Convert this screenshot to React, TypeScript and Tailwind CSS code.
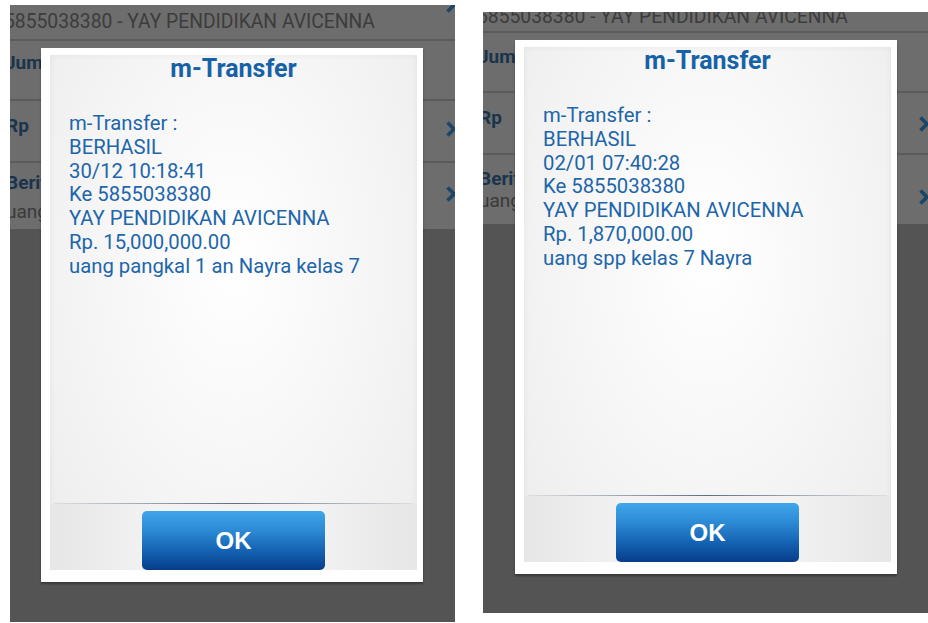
import React from "react";

type ModalProps = { lines: string[] };

function Chevron() {
  return (
    <svg width="12" height="18" viewBox="0 0 12 18" className="shrink-0 mr-[-2px]">
      <path d="M2.5 2.5 L9 9 L2.5 15.5" fill="none" stroke="#1b4668" strokeWidth="3.6" strokeLinecap="butt" />
    </svg>
  );
}

function Modal({ lines }: ModalProps) {
  return (
    <div className="w-[382px] h-[534px] bg-white pt-[7px] pl-[9px] pr-[6px] pb-[12px] shadow-[0_2px_2px_rgba(0,0,0,0.35)]">
      <div className="h-full flex flex-col bg-[radial-gradient(ellipse_at_50%_40%,#ffffff_0%,#f7f7f7_45%,#ececec_100%)] shadow-[inset_0_0_6px_rgba(0,0,0,0.06)]">
        <div className="text-center text-[25px] leading-[26px] font-bold text-[#1762a7] font-['Roboto',sans-serif] mt-[1px]">
          m-Transfer
        </div>
        <div className="flex-1 mt-[30px] pl-[19px] text-[20.3px] leading-[23.8px] text-[#1d66aa] font-['Roboto',sans-serif]">
          {lines.map((l, i) => (
            <div key={i} className="whitespace-nowrap">{l}</div>
          ))}
        </div>
        <div className="h-px mx-[4px] bg-[linear-gradient(to_right,rgba(120,130,145,0.15),#5d6f86_50%,rgba(120,130,145,0.15))]" />
        <div className="h-[66px] pt-[7px] flex justify-center bg-[linear-gradient(to_right,#e6e6e6,#f3f3f3_30%,#f3f3f3_70%,#e6e6e6)]">
          <div className="w-[183px] h-[59px] rounded-[5px] flex items-center justify-center bg-[linear-gradient(to_bottom,#40a6ea_0%,#2b88d3_35%,#135fb0_70%,#063d8a_100%)]">
            <span className="text-white text-[24px] font-bold font-['Liberation_Sans',Arial,sans-serif]">OK</span>
          </div>
        </div>
      </div>
    </div>
  );
}

type ScreenProps = {
  width: number;
  height: number;
  topH: number;
  topTextShift: number;
  showTopChevron: boolean;
  row4H: number;
  labelOffsets: [number, number, number];
  uangGap: number;
  chevronOffsets: [number, number];
  modalTop: number;
  modalLeft: number;
  lines: string[];
  className: string;
};

function Screen(p: ScreenProps) {
  return (
    <div
      className={`relative overflow-hidden bg-[#545454] font-['Roboto',sans-serif] ${p.className}`}
      style={{ width: p.width, height: p.height }}
    >
      <div className="bg-[#6d6d6d]">
        <div className="relative overflow-hidden border-b-2 border-[#5b5b5b]" style={{ height: p.topH }}>
          <div className="ml-[-6px] text-[19.3px] leading-[22px] text-[#3c3c3c] whitespace-nowrap" style={{ marginTop: p.topTextShift }}>
            5855038380 - YAY PENDIDIKAN AVICENNA
          </div>
          {p.showTopChevron && (
            <div className="absolute right-0 top-[-9px]">
              <Chevron />
            </div>
          )}
        </div>
        <div className="h-[60px] border-b-2 border-[#5b5b5b]" style={{ paddingTop: p.labelOffsets[0] }}>
          <div className="ml-[-5px] text-[19px] leading-[22px] font-bold text-[#1a344c]">Jumlah</div>
        </div>
        <div className="h-[62px] border-b-2 border-[#5b5b5b] flex justify-between" style={{ paddingTop: p.labelOffsets[1] }}>
          <div className="ml-[-4px] text-[19px] leading-[22px] font-bold text-[#1a344c]">Rp</div>
          <div style={{ marginTop: p.chevronOffsets[0] }}>
            <Chevron />
          </div>
        </div>
        <div className="flex justify-between" style={{ height: p.row4H, paddingTop: p.labelOffsets[2] }}>
          <div>
            <div className="ml-[-4px] text-[19px] leading-[22px] font-bold text-[#1a344c]">Berita</div>
            <div className="ml-[-4px] text-[19px] leading-[22px] text-[#3a3a3a]" style={{ marginTop: p.uangGap }}>uang</div>
          </div>
          <div style={{ marginTop: p.chevronOffsets[1] }}>
            <Chevron />
          </div>
        </div>
      </div>
      <div className="absolute" style={{ top: p.modalTop, left: p.modalLeft }}>
        <Modal lines={p.lines} />
      </div>
    </div>
  );
}

export default function App() {
  return (
    <div className="w-[928px] h-[623px] bg-white flex items-start overflow-hidden">
      <Screen
        className="ml-[10px] mt-[5px]"
        width={445}
        height={617}
        topH={36}
        topTextShift={6}
        showTopChevron={true}
        row4H={66}
        labelOffsets={[11, 14, 9]}
        uangGap={7}
        chevronOffsets={[5, 13]}
        modalTop={43}
        modalLeft={31}
        lines={[
          "m-Transfer :",
          "BERHASIL",
          "30/12 10:18:41",
          "Ke 5855038380",
          "YAY PENDIDIKAN AVICENNA",
          "Rp. 15,000,000.00",
          "uang pangkal 1 an Nayra kelas 7",
        ]}
      />
      <Screen
        className="ml-[28px] mt-[12px]"
        width={445}
        height={601}
        topH={21}
        topTextShift={-6}
        showTopChevron={false}
        row4H={69}
        labelOffsets={[13, 14, 13]}
        uangGap={0}
        chevronOffsets={[8, 20]}
        modalTop={28}
        modalLeft={32}
        lines={[
          "m-Transfer :",
          "BERHASIL",
          "02/01 07:40:28",
          "Ke 5855038380",
          "YAY PENDIDIKAN AVICENNA",
          "Rp. 1,870,000.00",
          "uang spp kelas 7 Nayra",
        ]}
      />
    </div>
  );
}
